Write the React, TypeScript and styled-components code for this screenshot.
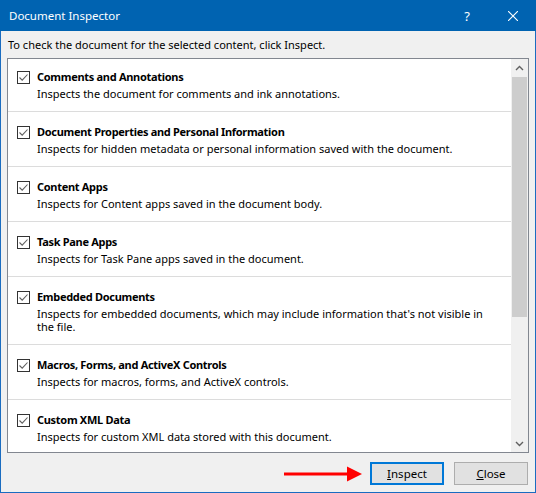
import React from 'react';
import styled, { createGlobalStyle } from 'styled-components';

const GlobalStyle = createGlobalStyle`
  html, body {
    margin: 0;
    padding: 0;
    background: #f0f0f0;
  }
  * {
    box-sizing: border-box;
  }
`;

const Window = styled.div`
  width: 536px;
  height: 493px;
  display: flex;
  flex-direction: column;
  background: #f0f0f0;
  border: 1px solid #1a6cc0;
  border-top: none;
  font-family: 'Noto Sans', 'Open Sans', sans-serif;
  font-size: 11px;
  color: #000;
`;

const TitleBar = styled.div`
  height: 31px;
  margin: 0 -1px;
  display: flex;
  align-items: center;
  padding-left: 9px;
  background: #0063b1;
  color: #fff;
`;

const Title = styled.div`
  flex: 1;
  font-size: 11.5px;
`;

const TitleButton = styled.div`
  width: 46px;
  height: 31px;
  display: flex;
  align-items: center;
  justify-content: center;
  font-size: 13px;
`;

const Body = styled.div`
  flex: 1;
  display: flex;
  flex-direction: column;
  padding: 6px 6px 0 6px;
`;

const Prompt = styled.div`
  line-height: 16px;
  padding-left: 1px;
  margin-bottom: 5px;
`;

const Panel = styled.div`
  height: 395px;
  display: flex;
  background: #fff;
  border: 1px solid #828790;
`;

const List = styled.div`
  flex: 1;
  overflow: hidden;
`;

const Row = styled.div`
  display: flex;
  gap: 7px;
  padding: 12px 14px 11px 9px;
  border-bottom: 1px solid #dcdcdc;

  &:first-child {
    padding-top: 10px;
  }
`;

const Box = styled.div`
  width: 13px;
  height: 13px;
  flex: none;
  margin-top: 2px;
  border: 1px solid #333;
  background: #fff;
  display: flex;
  align-items: center;
  justify-content: center;
`;

const Texts = styled.div`
  display: flex;
  flex-direction: column;
`;

const ItemTitle = styled.div`
  font-weight: bold;
  line-height: 16px;
  letter-spacing: -0.3px;
  margin-bottom: 2px;
`;

const ItemDesc = styled.div`
  line-height: 13px;
`;

const Scrollbar = styled.div`
  width: 17px;
  display: flex;
  flex-direction: column;
  background: #f0f0f0;
`;

const ScrollArrow = styled.div`
  height: 17px;
  display: flex;
  align-items: center;
  justify-content: center;
`;

const Thumb = styled.div`
  height: 240px;
  margin: 1px 1px 0 1px;
  background: #cdcdcd;
`;

const Track = styled.div`
  flex: 1;
`;

const Footer = styled.div`
  display: flex;
  justify-content: flex-end;
  align-items: center;
  gap: 10px;
  padding-top: 9px;
  padding-right: 1px;
`;

const Arrow = styled.svg`
  margin-right: -2px;
`;

const Button = styled.button<{ $default?: boolean }>`
  width: 74px;
  height: 23px;
  padding: 0;
  font-family: inherit;
  font-size: 11.5px;
  color: #000;
  background: #e1e1e1;
  border: ${p => (p.$default ? '2px solid #0078d7' : '1px solid #adadad')};
`;

const Key = styled.span`
  text-decoration: underline;
`;

interface Item {
  title: string;
  desc: string;
}

const items: Item[] = [
  { title: 'Comments and Annotations', desc: 'Inspects the document for comments and ink annotations.' },
  {
    title: 'Document Properties and Personal Information',
    desc: 'Inspects for hidden metadata or personal information saved with the document.'
  },
  { title: 'Content Apps', desc: 'Inspects for Content apps saved in the document body.' },
  { title: 'Task Pane Apps', desc: 'Inspects for Task Pane apps saved in the document.' },
  {
    title: 'Embedded Documents',
    desc: "Inspects for embedded documents, which may include information that's not visible in the file."
  },
  { title: 'Macros, Forms, and ActiveX Controls', desc: 'Inspects for macros, forms, and ActiveX controls.' },
  { title: 'Custom XML Data', desc: 'Inspects for custom XML data stored with this document.' }
];

const Check = () => (
  <svg width="11" height="11" viewBox="0 0 11 11">
    <path d="M1.5 5.5 L4.2 8.2 L9.5 2.5" fill="none" stroke="#606060" strokeWidth="1.1" />
  </svg>
);

const App: React.FC = () => {
  return (
    <>
      <GlobalStyle />
      <Window>
        <TitleBar>
          <Title>Document Inspector</Title>
          <TitleButton>?</TitleButton>
          <TitleButton>
            <svg width="10" height="10" viewBox="0 0 10 10">
              <path d="M0 0 L10 10 M10 0 L0 10" stroke="#fff" strokeWidth="1.1" />
            </svg>
          </TitleButton>
        </TitleBar>
        <Body>
          <Prompt>To check the document for the selected content, click Inspect.</Prompt>
          <Panel>
            <List>
              {items.map(item => (
                <Row key={item.title}>
                  <Box>
                    <Check />
                  </Box>
                  <Texts>
                    <ItemTitle>{item.title}</ItemTitle>
                    <ItemDesc>{item.desc}</ItemDesc>
                  </Texts>
                </Row>
              ))}
            </List>
            <Scrollbar>
              <ScrollArrow>
                <svg width="9" height="6" viewBox="0 0 9 6">
                  <path d="M1 5 L4.5 1.5 L8 5" fill="none" stroke="#606060" strokeWidth="1.4" />
                </svg>
              </ScrollArrow>
              <Thumb />
              <Track />
              <ScrollArrow>
                <svg width="9" height="6" viewBox="0 0 9 6">
                  <path d="M1 1 L4.5 4.5 L8 1" fill="none" stroke="#606060" strokeWidth="1.4" />
                </svg>
              </ScrollArrow>
            </Scrollbar>
          </Panel>
          <Footer>
            <Arrow width="78" height="16" viewBox="0 0 78 16">
              <path d="M0 8 L64 8" stroke="#ff0000" strokeWidth="3" />
              <path d="M63 0.5 L78 8 L63 15.5 Z" fill="#ff0000" />
            </Arrow>
            <Button $default>
              <Key>I</Key>nspect
            </Button>
            <Button>
              <Key>C</Key>lose
            </Button>
          </Footer>
        </Body>
      </Window>
    </>
  );
};

export default App;
